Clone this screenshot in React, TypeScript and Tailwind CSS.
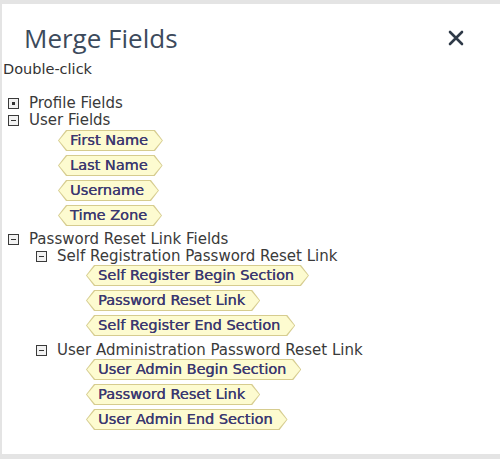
import React from 'react';

const chipClip =
  '[clip-path:polygon(8px_0,calc(100%_-_8px)_0,100%_50%,calc(100%_-_8px)_100%,8px_100%,0_50%)]';

function Chip({ label }: { label: string }) {
  return (
    <div className="flex h-[25px] items-center">
      <div className={`bg-[#d6cc8f] p-px ${chipClip}`}>
        <div
          className={`bg-[#fdfbd0] h-[19px] pl-[11px] pr-[14px] flex items-center text-[14.5px] leading-none text-[#3b3870] [text-shadow:0.3px_0_0_#3b3870] font-['DejaVu_Sans',sans-serif] ${chipClip}`}
        >
          {label}
        </div>
      </div>
    </div>
  );
}

function Toggle({ open }: { open: boolean }) {
  return (
    <span className="inline-flex w-[11px] h-[11px] border-[1.5px] border-[#3a3a3a] bg-[#f2f2f2] items-center justify-center mr-[10px] shrink-0">
      {open ? (
        <span className="block w-[5px] h-[1.5px] bg-[#333]" />
      ) : (
        <span className="block w-[3px] h-[3px] bg-[#333]" />
      )}
    </span>
  );
}

function Node({ label, open }: { label: string; open: boolean }) {
  return (
    <div className="flex items-center h-[17px] text-[15px] text-[#3a3a3a] font-['DejaVu_Sans',sans-serif]">
      <Toggle open={open} />
      <span>{label}</span>
    </div>
  );
}

export default function App() {
  return (
    <div className="w-[500px] h-[459px] bg-[#e4e4e4] pt-[4px] pl-[2px] pb-[5px] overflow-hidden">
      <div className="bg-white h-full">
        <div className="flex items-start justify-between pl-[22px] pr-[36px] pt-[16px]">
          <h1 className="text-[26px] leading-[36px] text-[#3c4a5c] font-['Open_Sans',sans-serif]">
            Merge Fields
          </h1>
          <svg width="16" height="16" viewBox="0 0 16 16" className="mt-[10px]">
            <path d="M2 2L14 14M14 2L2 14" stroke="#2f3a48" strokeWidth="2.6" strokeLinecap="round" />
          </svg>
        </div>
        <div className="pl-[1px] mt-[5px] text-[14.5px] leading-[17px] text-[#333] font-['DejaVu_Sans',sans-serif]">
          Double-click
        </div>
        <div className="pl-[6px] mt-[17px]">
          <Node label="Profile Fields" open={false} />
          <Node label="User Fields" open />
          <div className="pl-[50px] -mt-[1px]">
            <Chip label="First Name" />
            <Chip label="Last Name" />
            <Chip label="Username" />
            <Chip label="Time Zone" />
          </div>
          <div className="mt-[3px]">
            <Node label="Password Reset Link Fields" open />
          </div>
          <div className="pl-[28px]">
            <Node label="Self Registration Password Reset Link" open />
            <div className="pl-[50px] -mt-[2px]">
              <Chip label="Self Register Begin Section" />
              <Chip label="Password Reset Link" />
              <Chip label="Self Register End Section" />
            </div>
            <div className="mt-[4px]">
              <Node label="User Administration Password Reset Link" open />
            </div>
            <div className="pl-[50px] -mt-[2px]">
              <Chip label="User Admin Begin Section" />
              <Chip label="Password Reset Link" />
              <Chip label="User Admin End Section" />
            </div>
          </div>
        </div>
      </div>
    </div>
  );
}
